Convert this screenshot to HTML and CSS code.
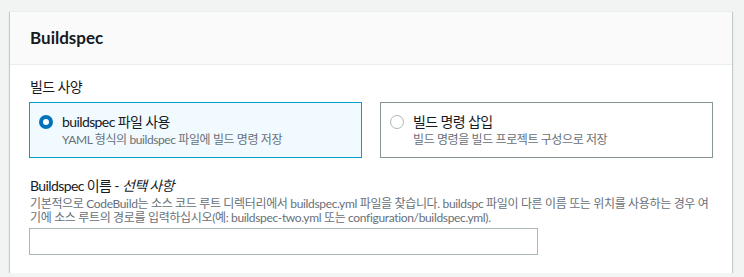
FILE: index.html
```html
<!DOCTYPE html>
<html lang="ko">
<head>
<meta charset="utf-8">
<link rel="stylesheet" href="styles.css">
</head>
<body>
<section class="card">
  <header class="card-header">
    <h2 class="card-title">Buildspec</h2>
  </header>
  <div class="card-body">
    <div class="field">
      <div class="label">빌드 사양</div>
      <div class="tiles">
        <label class="tile tile-selected">
          <span class="radio radio-checked"></span>
          <span class="tile-text">
            <span class="tile-title">buildspec 파일 사용</span>
            <span class="tile-desc">YAML 형식의 buildspec 파일에 빌드 명령 저장</span>
          </span>
        </label>
        <label class="tile">
          <span class="radio"></span>
          <span class="tile-text">
            <span class="tile-title">빌드 명령 삽입</span>
            <span class="tile-desc">빌드 명령을 빌드 프로젝트 구성으로 저장</span>
          </span>
        </label>
      </div>
    </div>
    <div class="field field-name">
      <div class="label">Buildspec 이름 - <i class="optional">선택 사항</i></div>
      <p class="hint">기본적으로 CodeBuild는 소스 코드 루트 디렉터리에서 buildspec.yml 파일을 찾습니다. buildspc 파일이 다른 이름 또는 위치를 사용하는 경우 여<br>기에 소스 루트의 경로를 입력하십시오(예: buildspec-two.yml 또는 configuration/buildspec.yml).</p>
      <input class="input" type="text">
    </div>
  </div>
</section>
</body>
</html>
```

FILE: styles.css
```css
html, body {
  margin: 0;
  padding: 0;
  background: #f2f3f3;
}
body {
  padding: 11px 12px 0 10px;
  font-family: "Lato", "Noto Sans CJK KR", sans-serif;
  color: #16191f;
}
.card {
  background: #ffffff;
  box-shadow: 0 1px 1px 0 rgba(0, 28, 36, 0.3), 1px 1px 1px 0 rgba(0, 28, 36, 0.15), -1px 1px 1px 0 rgba(0, 28, 36, 0.15);
  border-top: 1px solid #eaeded;
}
.card-header {
  background: #fafafa;
  border-bottom: 1px solid #eaeded;
  height: 52px;
  display: flex;
  align-items: center;
  padding: 0 20px;
}
.card-title {
  margin: 0;
  font-size: 17px;
  font-weight: 700;
  line-height: 22px;
}
.card-body {
  padding: 11px 19px 18px 19px;
}
.label {
  font-size: 14px;
  line-height: 22px;
  margin-left: 1px;
  letter-spacing: -0.6px;
}
.tiles {
  display: grid;
  grid-template-columns: 333px 333px;
  column-gap: 18px;
  margin-top: 4px;
}
.tile {
  display: flex;
  align-items: flex-start;
  height: 56px;
  box-sizing: border-box;
  border: 1px solid #879596;
  padding: 9px 10px 0 9px;
  gap: 9px;
}
.tile-selected {
  border-color: #00a1c9;
  background: #f1faff;
}
.radio {
  width: 14px;
  height: 14px;
  box-sizing: border-box;
  border-radius: 50%;
  border: 1px solid #aab7b8;
  background: #fff;
  margin-top: 3px;
  flex: none;
}
.radio-checked {
  border: 4px solid #0073bb;
}
.tile-text {
  display: flex;
  flex-direction: column;
}
.tile-title {
  font-size: 14px;
  line-height: 20px;
  letter-spacing: -0.6px;
}
.tile-desc {
  font-size: 12px;
  line-height: 15px;
  color: #687078;
  letter-spacing: -0.4px;
}
.field-name {
  margin-top: 17px;
}
.optional {
  font-style: italic;
}
.hint {
  margin: 0 0 0 1px;
  font-size: 12px;
  line-height: 14px;
  color: #687078;
  white-space: nowrap;
  letter-spacing: -0.34px;
}
.input {
  display: block;
  margin-top: 3px;
  width: 509px;
  height: 27px;
  box-sizing: border-box;
  border: 1px solid #aab7b8;
  border-radius: 0;
  background: #fff;
  padding: 0 8px;
}
```
